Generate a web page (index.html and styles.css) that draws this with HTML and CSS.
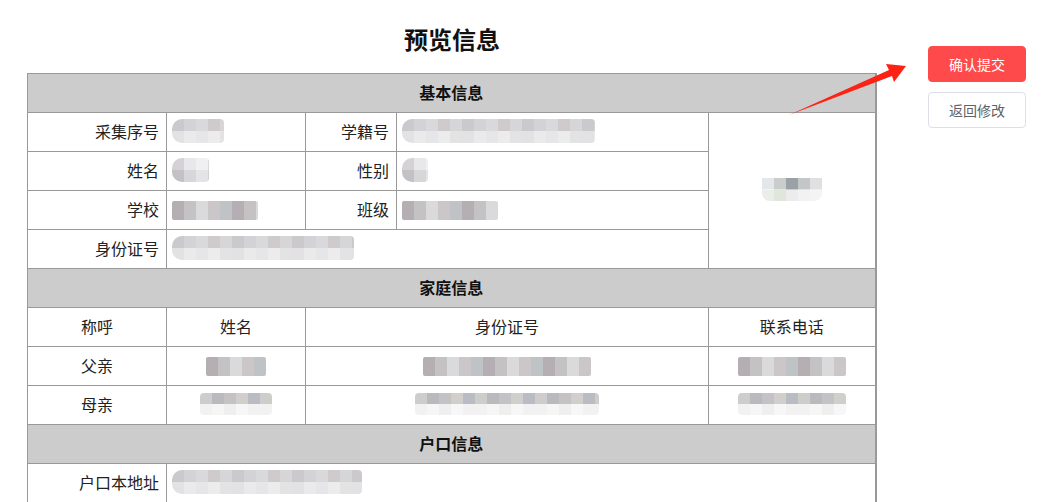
FILE: index.html
```html
<!DOCTYPE html>
<html lang="zh-CN">
<head>
<meta charset="utf-8">
<title>预览信息</title>
<link rel="stylesheet" href="styles.css">
</head>
<body>
<div class="page">
  <div class="main">
    <h1 class="title">预览信息</h1>
    <table class="info">
      <colgroup>
        <col class="c1"><col class="c2"><col class="c3"><col class="c4"><col class="c5">
      </colgroup>
      <tr><th colspan="5" class="sec">基本信息</th></tr>
      <tr>
        <td class="lbl">采集序号</td>
        <td class="val"><span class="mz mz-a" style="width:52px"></span></td>
        <td class="lbl">学籍号</td>
        <td class="val"><span class="mz mz-a" style="width:193px"></span></td>
        <td rowspan="4" class="photo"><span class="mz mz-p" style="width:60px"></span></td>
      </tr>
      <tr>
        <td class="lbl">姓名</td>
        <td class="val"><span class="mz mz-b" style="width:37px"></span></td>
        <td class="lbl">性别</td>
        <td class="val"><span class="mz mz-b" style="width:26px"></span></td>
      </tr>
      <tr>
        <td class="lbl">学校</td>
        <td class="val"><span class="mz mz-s" style="width:86px"></span></td>
        <td class="lbl">班级</td>
        <td class="val"><span class="mz mz-s" style="width:96px"></span></td>
      </tr>
      <tr>
        <td class="lbl">身份证号</td>
        <td class="val" colspan="3"><span class="mz mz-a" style="width:182px"></span></td>
      </tr>
      <tr><th colspan="5" class="sec">家庭信息</th></tr>
      <tr>
        <td class="ctr">称呼</td>
        <td class="ctr">姓名</td>
        <td class="ctr" colspan="2">身份证号</td>
        <td class="ctr">联系电话</td>
      </tr>
      <tr>
        <td class="ctr">父亲</td>
        <td class="ctr"><span class="mz mz-s" style="width:60px"></span></td>
        <td class="ctr" colspan="2"><span class="mz mz-s" style="width:168px"></span></td>
        <td class="ctr"><span class="mz mz-s" style="width:108px"></span></td>
      </tr>
      <tr>
        <td class="ctr">母亲</td>
        <td class="ctr"><span class="mz mz-m" style="width:72px"></span></td>
        <td class="ctr" colspan="2"><span class="mz mz-m" style="width:184px"></span></td>
        <td class="ctr"><span class="mz mz-m" style="width:108px"></span></td>
      </tr>
      <tr><th colspan="5" class="sec">户口信息</th></tr>
      <tr>
        <td class="lbl">户口本地址</td>
        <td class="val" colspan="4"><span class="mz mz-a" style="width:190px"></span></td>
      </tr>
    </table>
  </div>
  <div class="side">
    <button class="btn btn-primary">确认提交</button>
    <button class="btn btn-default">返回修改</button>
  </div>
</div>
<svg class="arrow" width="1059" height="502" viewBox="0 0 1059 502">
  <path d="M789 115 L889 70 L886 64 L906 66 L894 82 L892 76 Z" fill="#fc2214"/>
</svg>
</body>
</html>
```

FILE: styles.css
```css
* { box-sizing: border-box; }
html, body { margin: 0; padding: 0; background: #fff; }
body {
  font-family: "Noto Sans CJK SC", "Noto Sans", sans-serif;
  color: #222;
  position: relative;
  width: 1059px;
  height: 502px;
  overflow: hidden;
}
.page {
  display: flex;
  align-items: flex-start;
  padding-left: 27px;
}
.main {
  width: 850px;
  flex: none;
}
.title {
  margin: 0;
  height: 73px;
  padding-top: 21px;
  font-size: 24px;
  line-height: 36px;
  font-weight: bold;
  text-align: center;
  color: #111;
}
.info {
  width: 848px;
  table-layout: fixed;
  border-collapse: collapse;
  font-size: 16px;
  border-right: 2px solid #999;
}
.c1 { width: 139px; }
.c2 { width: 139px; }
.c3 { width: 91px; }
.c4 { width: 312px; }
.c5 { width: 167px; }
.info th, .info td {
  border: 1px solid #999;
  height: 39px;
  padding: 0 0 3px;
  line-height: 20px;
  vertical-align: middle;
}
.info .sec {
  background: #ccc;
  font-weight: bold;
  text-align: center;
  color: #111;
}
.lbl { text-align: right; padding-right: 7px !important; }
.val { text-align: left; padding-left: 5px !important; }
.ctr { text-align: center; }
.photo { text-align: center; }
.mz {
  display: inline-block;
  vertical-align: middle;
  height: 24px;
  border-radius: 10px 4px 4px 10px;
  background-repeat: repeat-x, repeat-x;
  background-size: 60px 50%, 60px 50%;
  background-position: 0 0, 0 100%;
  filter: blur(0.4px);
}
.mz-a {
  background-image:
    linear-gradient(90deg, #cbc9cc 0 12px, #d3d2d6 12px 24px, #d9d9db 24px 36px, #cfcbcd 36px 48px, #d6d6d8 48px 60px),
    linear-gradient(90deg, #e2e1e3 0 12px, #ebeaea 12px 24px, #e6e6e8 24px 36px, #ececec 36px 48px, #e3e3e3 48px 60px);
}
.mz-b {
  background-image:
    linear-gradient(90deg, #d5d2d6 0 12px, #e8e7e9 12px 24px, #f0f0f2 24px 36px, #d9d9db 36px 48px, #e6e6e8 48px 60px),
    linear-gradient(90deg, #c3c1c6 0 12px, #d7d6d8 12px 24px, #e4e4e6 24px 36px, #d1d1d3 36px 48px, #dededf 48px 60px);
}
.mz-s {
  height: 19px;
  border-radius: 2px;
  background-size: 60px 100%, 0 0;
  background-image:
    linear-gradient(90deg, #b5aeb3 0 12px, #c5c2c4 12px 24px, #dadadd 24px 36px, #cbc7c8 36px 48px, #c0c3c6 48px 60px),
    linear-gradient(90deg, #fff 0 1px, #fff 1px);
}
.mz-m {
  height: 22px;
  border-radius: 4px;
  background-image:
    linear-gradient(90deg, #cfcccc 0 12px, #b8babd 12px 24px, #c4c2c5 24px 36px, #d0cfcc 36px 48px, #b9bcc2 48px 60px),
    linear-gradient(90deg, #f2f2f3 0 12px, #f6f6f6 12px 24px, #efefef 24px 36px, #f7f7f7 36px 48px, #f2f2f2 48px 60px);
}
.mz-p {
  height: 23px;
  border-radius: 0 0 8px 8px;
  background-image:
    linear-gradient(90deg, #e4e6ea 0 12px, #c9cecd 12px 24px, #9ca1a8 24px 36px, #c4c7c8 36px 48px, #e0e0e2 48px 60px),
    linear-gradient(90deg, #eaeee8 0 12px, #dfe6dc 12px 24px, #ececec 24px 36px, #f2f2f2 36px 48px, #f4f5f3 48px 60px);
}
.side {
  margin-left: 51px;
  padding-top: 46px;
  display: flex;
  flex-direction: column;
  gap: 10px;
}
.btn {
  width: 98px;
  height: 36px;
  border-radius: 4px;
  font-family: "Noto Sans CJK SC", "Noto Sans", sans-serif;
  font-size: 14px;
  padding: 0;
  cursor: pointer;
}
.btn-primary {
  background: #fe4a4b;
  border: 1px solid #fe4a4b;
  color: #fff;
}
.btn-default {
  background: #fff;
  border: 1px solid #dcdfe6;
  color: #606266;
}
.arrow {
  position: absolute;
  left: 0;
  top: 0;
  pointer-events: none;
}
```
